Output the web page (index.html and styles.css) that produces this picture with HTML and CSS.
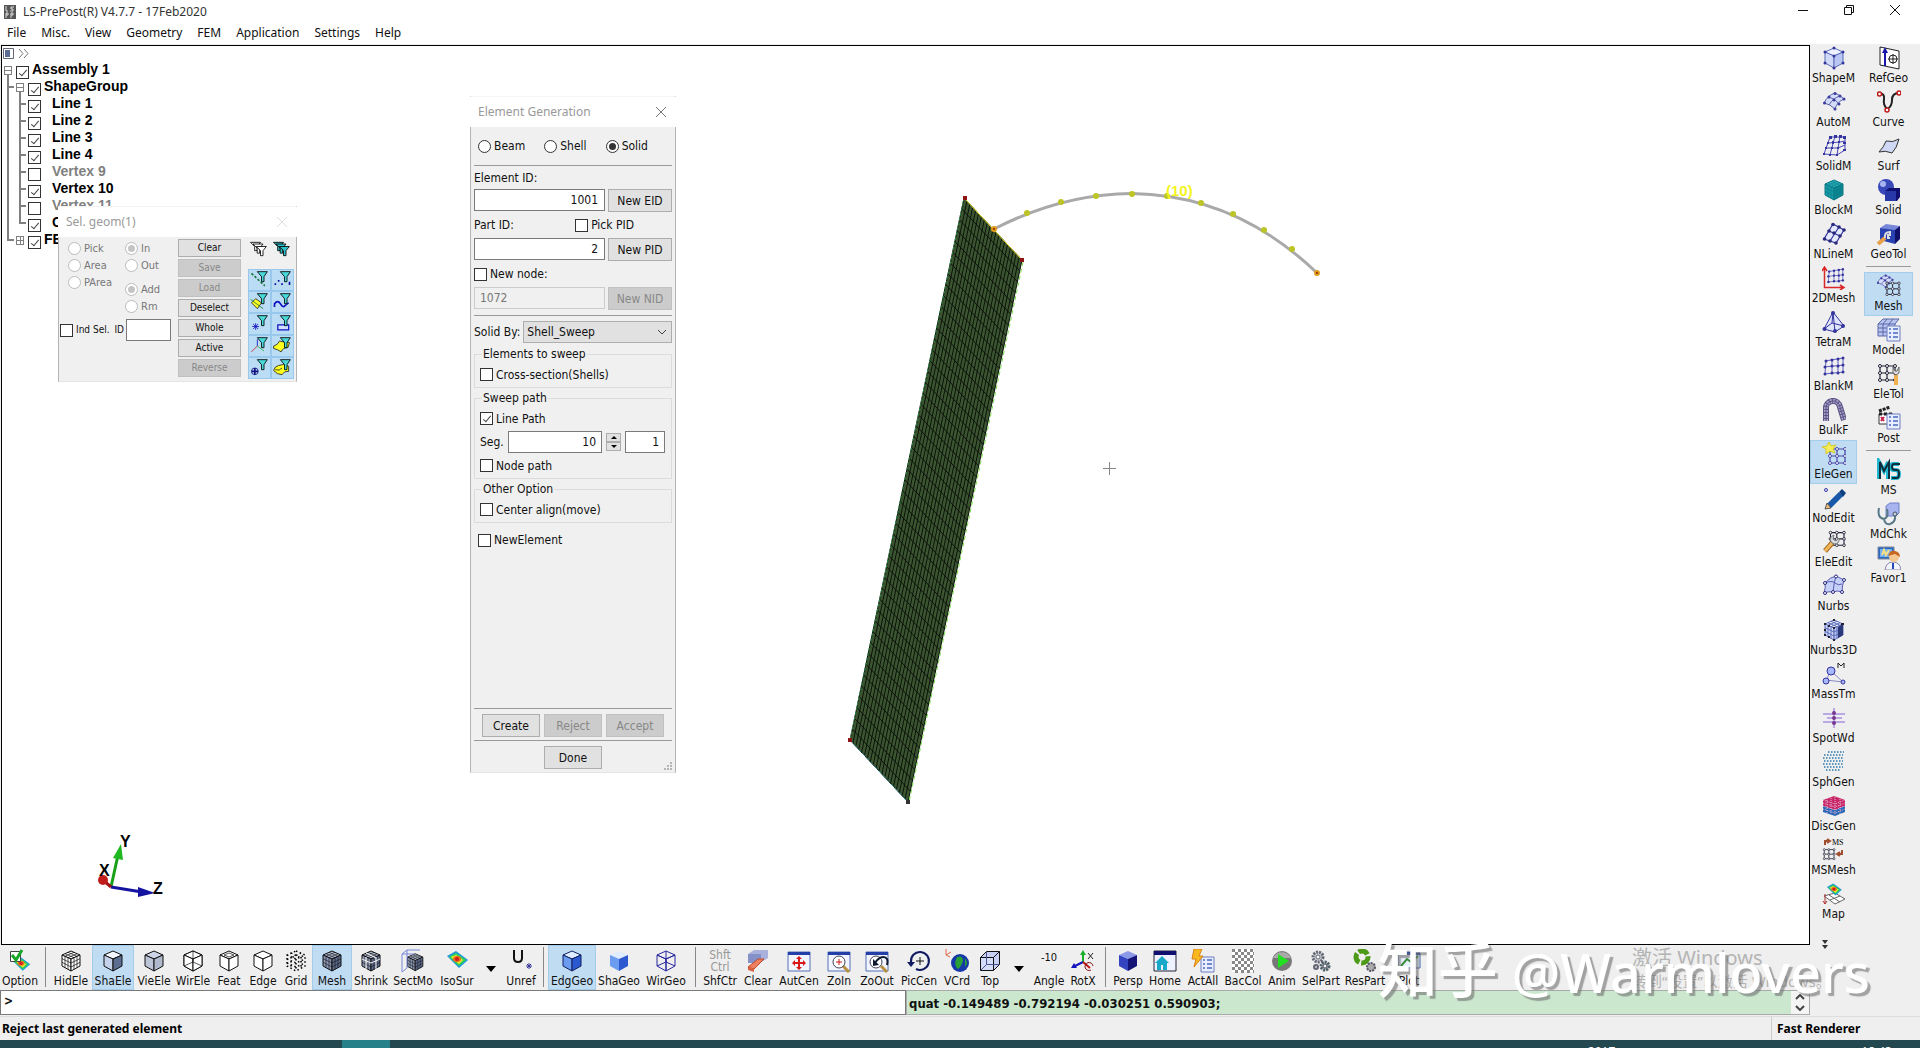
FILE: index.html
```html
<!DOCTYPE html>
<html lang="en">
<head>
    <meta charset="UTF-8">
    <meta name="viewport" content="width=device-width, initial-scale=1.0">
    <title>LS-PrePost(R) V4.7.7 - 17Feb2020</title>
    <link rel="stylesheet" href="styles.css">
</head>
<body>
    <!-- icon set -->
    <svg class="sprite" aria-hidden="true">
        <symbol id="cube" viewBox="0 0 24 24">
            <path class="top" d="M12 2 21 6 12 10 3 6z"/>
            <path class="left" d="M3 6 12 10V22L3 17z"/>
            <path class="right" d="M21 6 12 10V22L21 17z"/>
        </symbol>
        <symbol id="cubegrid" viewBox="0 0 24 24">
            <use href="#cube"/>
            <path class="ln" d="M6 7.3 15 3.3M9 8.7 18 4.7M6 4.7 15 8.7M9 3.3 18 7.3M6 7.3V18.7M9 8.7V20.3M15 8.7V20.3M18 7.3V18.7M3 9.7 12 14 21 9.7M3 13.3 12 18 21 13.3"/>
        </symbol>
        <symbol id="wire" viewBox="0 0 24 24">
            <use href="#cube"/>
            <path class="ln" d="M12 2V13M3 17 12 13 21 17"/>
        </symbol>
        <symbol id="patch" viewBox="0 0 24 24">
            <path d="M2 13Q6 5 13 3Q18 5 22 9Q15 12 13 19Q8 14 2 13z" fill="#d3dcf8" stroke="#5c5cb0"/>
            <path d="M7 7Q14 9 17 14M7 15Q11 8 18 6" fill="none" stroke="#5c5cb0"/>
            <g fill="#3c3c9c"><circle cx="2.500" cy="13" r="1.500"/><circle cx="13" cy="3.500" r="1.500"/><circle cx="22" cy="9" r="1.500"/><circle cx="13" cy="19" r="1.500"/><circle cx="7" cy="7" r="1.500"/><circle cx="17" cy="14" r="1.500"/><circle cx="18" cy="6" r="1.500"/><circle cx="12" cy="10" r="1.500"/></g>
        </symbol>
        <symbol id="grid" viewBox="0 0 24 24">
            <path d="M3 7 21 4M2 13 22 11M2 20 22 18M4 6 3 20M10 5 10 20M16 4 16 19M21 3 21 18" fill="none" stroke="#5c5cc0"/>
            <g fill="#34349c"><circle cx="4" cy="7" r="1.500"/><circle cx="10" cy="6" r="1.500"/><circle cx="16" cy="5" r="1.500"/><circle cx="21" cy="4" r="1.500"/><circle cx="3" cy="13" r="1.500"/><circle cx="10" cy="12" r="1.500"/><circle cx="16" cy="12" r="1.500"/><circle cx="21" cy="11" r="1.500"/><circle cx="3" cy="20" r="1.500"/><circle cx="10" cy="19" r="1.500"/><circle cx="16" cy="19" r="1.500"/><circle cx="21" cy="18" r="1.500"/></g>
        </symbol>
        <symbol id="nodes" viewBox="0 0 24 24">
            <path d="M5 4H20M5 11H20M5 18H20M5 4V18M12 4V18M20 4V18" fill="none" stroke="currentColor" stroke-width="1.200"/>
            <g fill="#fff" stroke="currentColor"><circle cx="5" cy="4" r="1.500"/><circle cx="12" cy="4" r="1.500"/><circle cx="20" cy="4" r="1.500"/><circle cx="5" cy="11" r="1.500"/><circle cx="12" cy="11" r="1.500"/><circle cx="20" cy="11" r="1.500"/><circle cx="5" cy="18" r="1.500"/><circle cx="12" cy="18" r="1.500"/><circle cx="20" cy="18" r="1.500"/></g>
        </symbol>
        <symbol id="wrench" viewBox="0 0 24 24">
            <path d="M3 21 11 12" stroke="#a06a20" stroke-width="5"/><path d="M3 21 10 13" stroke="#f2b75a" stroke-width="3"/>
            <path d="M9 12Q7 7 12 5L11 9 14 11 17 8Q18 14 12 14z" fill="#d8dce0" stroke="#777"/>
        </symbol>
        <symbol id="sheet" viewBox="0 0 24 24">
            <path d="M10 8H23V23H10z" fill="#e8edff" stroke="#6d7fc0"/>
            <path d="M12 11H14M16 11H21M12 15H14M16 15H21M12 19H14M16 19H21" stroke="#4a68c0" stroke-width="1.500"/>
        </symbol>
        <symbol id="map" viewBox="0 0 24 24">
            <path d="M2 7 11 2 23 11 14 19z" fill="#1c9ad6"/><path d="M4 8 11 4 21 11 14 17z" fill="#38d24e"/>
            <path d="M6 8 11 6 18 11 14 15z" fill="#f3ea2c"/><ellipse cx="12" cy="10" rx="4" ry="3" fill="#f06a1c"/><ellipse cx="12" cy="10" rx="2" ry="2" fill="#d01c1c"/>
        </symbol>
        <symbol id="win" viewBox="0 0 24 24">
            <path d="M1 3H23V22H1z" fill="#f2f5ff" stroke="#5470b8"/><path d="M1 3H23V6H1z" fill="#2440a8"/>
        </symbol>
        <symbol id="gear" viewBox="0 0 24 24">
            <circle cx="9" cy="8" r="5" fill="#c9cdd0" stroke="#667" stroke-width="3" stroke-dasharray="2 1"/><circle cx="9" cy="8" r="2" fill="#fff" stroke="#667"/>
            <circle cx="16" cy="17" r="4" fill="#a9b4bb" stroke="#4f6068" stroke-width="3" stroke-dasharray="2 1"/><circle cx="16" cy="17" r="2" fill="#eee" stroke="#556"/>
            <circle cx="7" cy="18" r="2" fill="#c9cdd0" stroke="#667" stroke-width="2"/>
        </symbol>
        <symbol id="funnel" viewBox="0 0 24 24">
            <path d="M10 2H22L18 8V14H15V8z" fill="#48d8d8" stroke="#000"/>
        </symbol>
        <symbol id="funnels" viewBox="0 0 24 24">
            <path d="M3 4H15L11 9V14H8V9z" fill="currentColor" stroke="#000"/>
            <path d="M6 6H18L14 11V17H11V11z" fill="currentColor" stroke="#000"/>
            <path d="M10 9H22L18 14V20H15V14z" fill="currentColor" stroke="#000"/>
        </symbol>
    </svg>

    <header class="titlebar">
        <svg class="appicon" viewBox="0 0 12 14"><path fill="#555" d="M0 0H12V14H0z"/><path stroke="#ddd" fill="none" d="M2 1V6H4M10 2H7V4H9V6H6M2 13V8H4V10H2M7 13V8H9V10H7"/></svg>
        <h1>LS-PrePost(R) V4.7.7 - 17Feb2020</h1>
        <div class="winbtns">
            <button aria-label="Minimize"><svg viewBox="0 0 12 12"><path d="M1 6.500H11"/></svg></button>
            <button aria-label="Restore"><svg viewBox="0 0 12 12"><path d="M1.500 3.500H8.500V10.500H1.500zM3.500 3.500V1.500H10.500V8.500H8.500"/></svg></button>
            <button aria-label="Close"><svg viewBox="0 0 12 12"><path d="M1 1 11 11M11 1 1 11"/></svg></button>
        </div>
    </header>
    <nav class="menu">
        <button>File</button><button>Misc.</button><button>View</button><button>Geometry</button><button>FEM</button><button>Application</button><button>Settings</button><button>Help</button>
    </nav>

    <div class="work">
        <main class="left-side">
            <section class="canvas">
                <svg class="scene">
                    <g transform="translate(-2 -46)">
                        <path d="M964 198 1022 260 908 802 850 740z" fill="#3b5530"/>
                        <path id="mesh" fill="none" stroke="#0b120a"/>
                        <path d="M964 198 850 740" stroke="#2f8a4a" stroke-dasharray="3 2"/>
                        <path d="M964 198 1022 260" stroke="#e8e020"/>
                        <path d="M1023 262 909 802" stroke="#7ddc50" stroke-dasharray="4 3"/>
                        <path d="M850 740 908 802" stroke="#2a8f90" stroke-dasharray="4 2"/>
                        <path d="M994 229Q1062 194 1132 193.500Q1236 195 1317 273" fill="none" stroke="#a9a9a9" stroke-width="3"/>
                        <g fill="#bdc425">
                            <circle cx="1027" cy="213" r="3"/><circle cx="1061" cy="202" r="3"/><circle cx="1096" cy="196" r="3"/><circle cx="1132" cy="194" r="3"/><circle cx="1167" cy="196" r="3"/>
                            <circle cx="1201" cy="203" r="3"/><circle cx="1233" cy="214" r="3"/><circle cx="1264" cy="230" r="3"/><circle cx="1292" cy="249" r="3"/>
                        </g>
                        <g fill="#7a2a08" stroke="#e39a1c" stroke-width="2"><circle cx="994" cy="229" r="2"/><circle cx="1317" cy="273" r="2"/></g>
                        <g fill="#8c1414"><path d="M963 196H967V200H963zM1020 258H1024V262H1020zM848 738H852V742H848z"/><path fill="#333" d="M906 800H910V804H906z"/></g>
                        <text class="seglabel" x="1166" y="196">(10)</text>
                        <path d="M1103 468.500H1116M1109.500 462V475" stroke="#888"/>
                        <!-- axis triad -->
                        <path d="M111 887 118 855" stroke="#18a018" stroke-width="3"/><path d="M113 858 121 844 123 860z" fill="#20b820"/>
                        <path d="M111 887 142 892" stroke="#1414a0" stroke-width="3"/><path d="M138 887 155 893 138 897z" fill="#1414a0"/>
                        <path d="M111 887 103 880" stroke="#a01414" stroke-width="3"/><circle cx="103" cy="880" r="5" fill="#c01c1c"/>
                        <g class="axis"><text x="120" y="847">Y</text><text x="99" y="876">X</text><text x="153" y="894">Z</text></g>
                    </g>
                </svg>

                <div class="tree">
                    <div class="treebar">
                        <svg viewBox="0 0 28 14"><path d="M1.500 2.500H11.500V12.500H1.500z" fill="#fff" stroke="#667"/><path d="M3 4H8V11H3z" fill="#5c6c94"/><path d="M17 3 21 7.500 17 12M22 3 26 7.500 22 12" fill="none" stroke="#777"/></svg>
                    </div>
                    <div class="node"><i class="exp"></i><label><input type="checkbox" checked><b>Assembly 1</b></label></div>
                    <div class="node"><i class="tee"></i><i class="exp"></i><label><input type="checkbox" checked><b>ShapeGroup</b></label></div>
                    <div class="node leaf"><i class="bar"></i><i class="tee"></i><label><input type="checkbox" checked><b>Line 1</b></label></div>
                    <div class="node leaf"><i class="bar"></i><i class="tee"></i><label><input type="checkbox" checked><b>Line 2</b></label></div>
                    <div class="node leaf"><i class="bar"></i><i class="tee"></i><label><input type="checkbox" checked><b>Line 3</b></label></div>
                    <div class="node leaf"><i class="bar"></i><i class="tee"></i><label><input type="checkbox" checked><b>Line 4</b></label></div>
                    <div class="node leaf off"><i class="bar"></i><i class="tee"></i><label><input type="checkbox"><b>Vertex 9</b></label></div>
                    <div class="node leaf"><i class="bar"></i><i class="tee"></i><label><input type="checkbox" checked><b>Vertex 10</b></label></div>
                    <div class="node leaf off"><i class="bar"></i><i class="tee"></i><label><input type="checkbox"><b>Vertex 11</b></label></div>
                    <div class="node leaf"><i class="bar"></i><i class="ell"></i><label><input type="checkbox" checked><b>C</b></label></div>
                    <div class="node"><i class="ell"></i><i class="exp plus"></i><label><input type="checkbox" checked><b>FE</b></label></div>
                </div>

                <section class="window selgeom">
                    <header><h2>Sel. geom(1)</h2><button aria-label="Close"><svg viewBox="0 0 12 12"><path d="M1 1 11 11M11 1 1 11"/></svg></button></header>
                    <div class="selbody">
                        <div class="selleft">
                            <div class="radios">
                                <div>
                                    <label><input type="radio" name="how" disabled>Pick</label>
                                    <label><input type="radio" name="how" disabled>Area</label>
                                    <label><input type="radio" name="how" disabled>PArea</label>
                                </div>
                                <div>
                                    <label><input type="radio" name="side" checked disabled>In</label>
                                    <label><input type="radio" name="side" disabled>Out</label>
                                    <label class="apart"><input type="radio" name="op" checked disabled>Add</label>
                                    <label><input type="radio" name="op" disabled>Rm</label>
                                </div>
                            </div>
                            <div class="indsel">
                                <label><input type="checkbox">Ind Sel.</label>
                                <label for="selid">ID</label><input type="text" id="selid">
                            </div>
                        </div>
                        <div class="selbtns">
                            <button>Clear</button><button disabled>Save</button><button disabled>Load</button><button>Deselect</button><button>Whole</button><button>Active</button><button disabled>Reverse</button>
                        </div>
                        <div class="filters">
                            <button class="plain" aria-label="No filter"><svg class="none"><use href="#funnels"/></svg></button>
                            <button class="plain" aria-label="All filters"><svg class="all"><use href="#funnels"/></svg></button>
                            <button aria-label="Edge filter"><svg viewBox="0 0 24 24"><path d="M3 4 19 19" stroke="#1a7a3a" stroke-width="2" stroke-dasharray="3 2"/><use href="#funnel"/></svg></button>
                            <button aria-label="Point filter"><svg viewBox="0 0 24 24"><path d="M3 16H5V18H3zM7 12H9V14H7zM11 16H13V18H11zM20 14H22V18H20z" fill="#1010a0"/><use href="#funnel"/></svg></button>
                            <button aria-label="Face filter"><svg viewBox="0 0 24 24"><path d="M3 13 8 8 15 13 10 20z" fill="#ffff20" stroke="#223"/><path d="M2 9 17 20" stroke="#1a7a3a"/><use href="#funnel"/></svg></button>
                            <button aria-label="Curve filter"><svg viewBox="0 0 24 24"><path d="M3 18V14Q7 9 10 14T15 17T20 13" fill="none" stroke="#1010c0" stroke-width="2"/><use href="#funnel"/></svg></button>
                            <button aria-label="Vertex filter"><svg viewBox="0 0 24 24"><path d="M8 11V19M4 15H12M5 12 11 18M11 12 5 18" stroke="#1010c0"/><use href="#funnel"/></svg></button>
                            <button aria-label="Plane filter"><svg viewBox="0 0 24 24"><path d="M7 13H20V19H7z" fill="#cfe0ff" stroke="#1010c0" stroke-width="1.500"/><use href="#funnel"/></svg></button>
                            <button aria-label="Axis filter"><svg viewBox="0 0 24 24"><path d="M10 4V12" stroke="#1010c0"/><path d="M10 12 3 19" stroke="#d02020"/><path d="M10 12 18 18" stroke="#20b040"/><use href="#funnel"/></svg></button>
                            <button aria-label="Shell filter"><svg viewBox="0 0 24 24"><path d="M2 12Q7 11 9 6Q15 8 21 8L19 14Q13 14 11 19Q7 16 2 15z" fill="#ffff20" stroke="#222"/><use href="#funnel"/></svg></button>
                            <button aria-label="Center filter"><svg viewBox="0 0 24 24"><circle cx="7" cy="16" r="4" fill="none" stroke="#101080"/><path d="M7 12V20M3 16H11" stroke="#101080" stroke-width="2"/><use href="#funnel"/></svg></button>
                            <button aria-label="Solid filter"><svg viewBox="0 0 24 24"><path d="M2 15Q3 10 8 9Q14 6 20 10L20 16Q15 15 12 20Q6 20 2 15z" fill="#ffff20" stroke="#222"/><path d="M4 14Q9 16 12 12" fill="none" stroke="#222"/><use href="#funnel"/></svg></button>
                        </div>
                    </div>
                </section>

                <section class="window elegen">
                    <header><h2>Element Generation</h2><button aria-label="Close"><svg viewBox="0 0 12 12"><path d="M1 1 11 11M11 1 1 11"/></svg></button></header>
                    <form class="genbody">
                        <div class="kind">
                            <label><input type="radio" name="kind">Beam</label>
                            <label><input type="radio" name="kind">Shell</label>
                            <label><input type="radio" name="kind" checked>Solid</label>
                        </div>
                        <hr>
                        <div class="line"><label for="eid">Element ID:</label></div>
                        <div class="field"><input type="text" id="eid" value="1001"><button type="button">New EID</button></div>
                        <div class="line wide"><label for="pid">Part ID:</label><label class="pick"><input type="checkbox">Pick PID</label></div>
                        <div class="field"><input type="text" id="pid" value="2"><button type="button">New PID</button></div>
                        <div class="line wide"><label><input type="checkbox">New node:</label></div>
                        <div class="field nid"><input type="text" value="1072" aria-label="Node ID" disabled><button type="button" disabled>New NID</button></div>
                        <hr>
                        <div class="by"><label for="by">Solid By:</label><select id="by"><option>Shell_Sweep</option></select></div>
                        <fieldset>
                            <legend>Elements to sweep</legend>
                            <label><input type="checkbox">Cross-section(Shells)</label>
                        </fieldset>
                        <fieldset>
                            <legend>Sweep path</legend>
                            <label><input type="checkbox" checked>Line Path</label>
                            <div class="seg">
                                <label for="seg">Seg.</label><input type="text" id="seg" value="10">
                                <span class="spin"><button type="button" aria-label="More"></button><button type="button" aria-label="Less" class="down"></button></span>
                                <input type="text" class="ratio" value="1" aria-label="Ratio">
                            </div>
                            <label><input type="checkbox">Node path</label>
                        </fieldset>
                        <fieldset>
                            <legend>Other Option</legend>
                            <label><input type="checkbox">Center align(move)</label>
                        </fieldset>
                        <label class="newel"><input type="checkbox">NewElement</label>
                        <hr class="push">
                        <div class="actions"><button type="button">Create</button><button type="button" disabled>Reject</button><button type="button" disabled>Accept</button></div>
                        <hr>
                        <div class="actions"><button type="button">Done</button></div>
                    </form>
                    <svg class="grip" viewBox="0 0 10 10"><path d="M7 1H9V3H7zM4 4H6V6H4zM7 4H9V6H7zM1 7H3V9H1zM4 7H6V9H4zM7 7H9V9H7z" fill="#b5b5b5"/></svg>
                </section>
            </section>

            <div class="toolbar">
                <button class="tool s40"><svg viewBox="0 0 24 24"><g transform="translate(1 6)"><use href="#map" width="24" height="20"/></g><path d="M2.500 2.500H12.500V12.500H2.500z" fill="#fff" stroke="#444"/><path d="M4 6 8 11 14 1" fill="none" stroke="#18a828" stroke-width="3"/></svg>Option</button>
                <i class="sep"></i>
                <button class="tool s42"><svg class="white"><use href="#cubegrid"/></svg>HidEle</button>
                <button class="tool s42 on"><svg class="shade"><use href="#cube"/></svg>ShaEle</button>
                <button class="tool s40"><svg class="flat"><use href="#cube"/></svg>VieEle</button>
                <button class="tool s38"><svg class="white"><use href="#cubegrid"/><use href="#wire"/></svg>WirEle</button>
                <button class="tool s34"><svg class="white" viewBox="0 0 24 24"><use href="#cube"/><path class="ln" d="M7 6 12 4 17 6 12 8z"/></svg>Feat</button>
                <button class="tool s34"><svg class="white"><use href="#cube"/></svg>Edge</button>
                <button class="tool s32"><svg viewBox="0 0 24 24"><path d="M12 2 21 6V17L12 22 3 17V6zM3 6 12 10 21 6M12 10V22M3 10 12 14 21 10M3 14 12 18 21 14M7 8V20M17 8V20M7 4 17 9M17 4 7 9" fill="none" stroke="#000" stroke-width="1.500" stroke-dasharray="1.500 2.500"/></svg>Grid</button>
                <button class="tool s40 on"><svg class="dark"><use href="#cubegrid"/></svg>Mesh</button>
                <button class="tool s38"><svg class="dark" viewBox="0 0 24 24"><use href="#cubegrid"/><path d="M3 10 12 14 21 10M7 8V20M17 8V20M7 4 17 9" fill="none" stroke="#fff"/></svg>Shrink</button>
                <button class="tool s46"><svg class="dark" viewBox="0 0 24 24"><g transform="translate(4 3) scale(.850)"><use href="#cubegrid" width="24" height="24"/></g><path d="M1 5 6 1V19L1 23zM6 1H19M1 5H13" fill="none" stroke="#7a88d8"/></svg>SectMo</button>
                <button class="tool s42"><svg><use href="#map"/></svg>IsoSur</button>
                <button class="drop" aria-label="More surfaces"></button>
                <button class="tool s34"><svg viewBox="0 0 24 24"><path d="M5 1V9Q5 13 9 13T13 9V1" fill="none" stroke="#111" stroke-width="2"/><path d="M20 14V20M17 17H23M18 15 22 19M22 15 18 19" stroke="#34349c"/></svg>Unref</button>
                <i class="sep"></i>
                <button class="tool s48 on"><svg class="blue"><use href="#cube"/></svg>EdgGeo</button>
                <button class="tool s46"><svg class="blue noline"><use href="#cube"/></svg>ShaGeo</button>
                <button class="tool s48"><svg class="wired"><use href="#wire"/></svg>WirGeo</button>
                <i class="sep"></i>
                <button class="tool s40"><span class="keys">Shft<br>Ctrl</span>ShfCtr</button>
                <button class="tool s36"><svg viewBox="0 0 24 24"><path d="M2 5 8 1H22V9L14 14H2z" fill="#a8b2dc"/><path d="M2 5H15V14H2z" fill="#8490c8"/><path d="M2 18 12 10H18L8 20z" fill="#f08060" stroke="#c04828"/><path d="M2 18 8 20V23L2 21z" fill="#d86040"/></svg>Clear</button>
                <button class="tool s46"><svg viewBox="0 0 24 24"><use href="#win"/><path d="M12 8V20M6 14H18" stroke="#d81818" stroke-width="2"/><path d="M12 7 15 10H9zM12 21 15 18H9zM5 14 8 11V17zM19 14 16 11V17z" fill="#d81818"/></svg>AutCen</button>
                <button class="tool s34"><svg viewBox="0 0 24 24"><use href="#win"/><path d="M16 17 22 23" stroke="#b89040" stroke-width="3"/><circle cx="12" cy="13" r="6" fill="#fff" stroke="#445"/><path d="M12 10V16M9 13H15" stroke="#c81818"/></svg>ZoIn</button>
                <button class="tool s42"><svg viewBox="0 0 24 24"><use href="#win"/><path d="M16 17 22 23" stroke="#b89040" stroke-width="3"/><circle cx="11" cy="13" r="6" fill="#fff" stroke="#445"/><path d="M22 16Q24 8 18 8 14 8 10 14" fill="none" stroke="#101830" stroke-width="2"/><path d="M8 10V17L14 16z" fill="#101830"/></svg>ZoOut</button>
                <button class="tool s42"><svg viewBox="0 0 24 24"><path d="M4 13A9 9 0 1 1 9 20" fill="none" stroke="#101a60" stroke-width="2"/><path d="M0 13H8L4 18z" fill="#101a60"/><path d="M13 8V16M9 12H17" stroke="#111"/></svg>PicCen</button>
                <button class="tool s34"><svg viewBox="0 0 24 24"><circle cx="15" cy="14" r="9" fill="#1638a8"/><path d="M12 8Q18 6 18 12 16 18 13 20 8 16 12 8zM20 9Q24 14 20 18z" fill="#28a038"/><path d="M1 0V6L5 8M1 6 6 3" fill="none" stroke="#e06848"/></svg>VCrd</button>
                <button class="tool s32"><svg viewBox="0 0 24 24"><path d="M2.500 8.500H15.500V21.500H2.500z" fill="#d4dcf8" stroke="#111"/><path d="M2.500 8.500 8.500 2.500H21.500V15.500L15.500 21.500V8.500z" fill="#c8d0f4" stroke="#111"/><path d="M15.500 8.500 21.500 2.500" stroke="#111"/><path d="M8.500 2.500V15.500H21.500M8.500 15.500 2.500 21.500" fill="none" stroke="#4a5290"/></svg>Top</button>
                <button class="drop" aria-label="More views"></button>
                <button class="tool s34"><span class="angle">-10</span>Angle</button>
                <button class="tool s34"><svg viewBox="0 0 24 24"><path d="M12 13V3" stroke="#18b028" stroke-width="2"/><path d="M12 13 2 18" stroke="#1414c0" stroke-width="2"/><path d="M12 1 15 6H9z" fill="#18b028"/><path d="M0 19 3 14 6 19z" fill="#1414c0"/><path d="M12 13 19 19" stroke="#c01414" stroke-width="2"/><path d="M22 17A4 4 0 1 0 20 21" fill="none" stroke="#801010"/><path d="M17 4 22 10M22 4 17 10" stroke="#222"/></svg>RotX</button>
                <i class="sep"></i>
                <button class="tool s36"><svg class="navy noline"><use href="#cube"/></svg>Persp</button>
                <button class="tool s38"><svg viewBox="0 0 24 24"><path d="M1 2H23V22H1z" fill="#eef2ff" stroke="#223"/><path d="M1 2H23V6H1z" fill="#101070"/><path d="M2 14 9 7 16 14H14V21H10V16H8V21H4V14z" fill="#18a8c8"/></svg>Home</button>
                <button class="tool s38"><svg viewBox="0 0 24 24"><use href="#sheet"/><path d="M3 0H11L8 7H12L3 18 5 10H1z" fill="#f8b820" stroke="#d88010"/></svg>ActAll</button>
                <button class="tool s42"><svg viewBox="0 0 24 24"><path d="M1 0H23V23H1z" fill="#fff"/><path d="M1 1.500H23M1 7.500H23M1 13.500H23M1 19.500H23" stroke="#888" stroke-width="3" stroke-dasharray="3 3"/><path d="M4 4.500H23M4 10.500H23M4 16.500H23M4 22.500H23" stroke="#888" stroke-width="3" stroke-dasharray="3 3"/></svg>BacCol</button>
                <button class="tool s36"><svg viewBox="0 0 24 24"><circle cx="12" cy="12" r="10" fill="#777"/><path d="M3 9A10 10 0 0 1 21 9z" fill="#aaa"/><path d="M8 5 19 12 8 19z" fill="#20e020"/></svg>Anim</button>
                <button class="tool s42"><svg><use href="#gear"/></svg>SelPart</button>
                <button class="tool s46"><svg viewBox="0 0 24 24"><circle cx="9" cy="8" r="6" fill="none" stroke="#4c9a18" stroke-width="5" stroke-dasharray="10 2"/><circle cx="18" cy="18" r="4" fill="#aaa" stroke="#556" stroke-width="2" stroke-dasharray="2 1"/></svg>ResPart</button>
                <button class="tool s42"><svg viewBox="0 0 24 24"><path d="M1 3H23V19H1z" fill="#e6f0fa" stroke="#4060a0"/><path d="M1 3H23V6H1z" fill="#2848a0"/><path d="M4 17 10 10 14 13 21 7" fill="none" stroke="#3a8a3a" stroke-width="2"/></svg>Plot</button>
            </div>

            <div class="cmdrow">
                <input type="text" class="cmd" value="&gt;" aria-label="Command">
                <div class="log"><p>quat -0.149489 -0.792194 -0.030251 0.590903;</p>
                    <div class="scroll">
                        <button aria-label="Up"><svg viewBox="0 0 10 6"><path d="M1 5 5 1 9 5"/></svg></button>
                        <button aria-label="Down"><svg viewBox="0 0 10 6"><path d="M1 1 5 5 9 1"/></svg></button>
                    </div>
                </div>
            </div>
        </main>

        <aside class="side">
            <div class="col">
                <button class="tool"><svg viewBox="0 0 24 24"><g class="pale"><use href="#cube"/></g><g fill="#34349c"><circle cx="12" cy="2" r="1.500"/><circle cx="21" cy="6" r="1.500"/><circle cx="3" cy="6" r="1.500"/><circle cx="12" cy="10" r="1.500"/><circle cx="21" cy="17" r="1.500"/><circle cx="3" cy="17" r="1.500"/><circle cx="12" cy="22" r="1.500"/></g></svg>ShapeM</button>
                <button class="tool"><svg><use href="#patch"/></svg>AutoM</button>
                <button class="tool"><svg viewBox="0 0 24 24"><path d="M8 3 2 20M13 2 8 21M18 2 15 21M23 2V16M8 3H23M6 9 18 8 23 7M4 14 16 14 23 11M2 20 15 21 23 16" fill="none" stroke="#4848b8"/><path d="M7 2H10V5H7zM12 1H15V4H12zM17 1H20V4H17zM5 8H7V10H5zM10 7H12V10H10zM16 7H18V9H16zM3 13H5V15H3zM9 13H11V15H9zM15 13H17V15H15zM1 19H3V21H1zM7 20H9V22H7zM14 20H16V22H14zM21 2H24V5H21zM21 8H24V10H21zM21 15H24V17H21z" fill="#34349c"/></svg>SolidM</button>
                <button class="tool"><svg class="teal"><use href="#cubegrid"/></svg>BlockM</button>
                <button class="tool"><svg viewBox="0 0 24 24"><path d="M11 2 22 8 14 21 2 17zM7 9 18 14M17 5 8 19" fill="#e6eaff" stroke="#34349c" stroke-width="1.200"/><g fill="#28287c"><circle cx="11" cy="2.500" r="1.800"/><circle cx="22" cy="8" r="1.800"/><circle cx="14" cy="21" r="1.800"/><circle cx="2.500" cy="17" r="1.800"/><circle cx="7" cy="9" r="1.800"/><circle cx="18" cy="14" r="1.800"/><circle cx="17" cy="5" r="1.800"/><circle cx="8" cy="19" r="1.800"/><circle cx="12" cy="11" r="1.800"/></g></svg>NLineM</button>
                <button class="tool"><svg viewBox="0 0 24 24"><g transform="translate(4 0) scale(.800)"><use href="#grid" width="24" height="24"/></g><path d="M2.500 2V21.500H22M0 5 2.500 1 5 5M18 19 22 21.500 18 24" fill="none" stroke="#d82828" stroke-width="1.500"/></svg>2DMesh</button>
                <button class="tool"><svg viewBox="0 0 24 24"><path d="M11 2 2 19 13 22 22 16z" fill="#dfe4ff" stroke="#34349c"/><path d="M11 2 13 22M2 19 10 13 22 16M11 2 10 13" fill="none" stroke="#34349c"/><g fill="#34349c"><circle cx="11" cy="3" r="2"/><circle cx="2.500" cy="19" r="2"/><circle cx="13" cy="21" r="2"/><circle cx="21" cy="16" r="2"/></g></svg>TetraM</button>
                <button class="tool"><svg><use href="#grid"/></svg>BlankM</button>
                <button class="tool"><svg viewBox="0 0 24 24"><path d="M4 23V11A7 7 0 0 1 18 9L22 22" fill="none" stroke="#5c5484" stroke-width="6"/><path d="M4 23V11A7 7 0 0 1 18 9L22 22" fill="none" stroke="#a8a0c8" stroke-width="4" stroke-dasharray="2 1"/><path d="M4 23V11A7 7 0 0 1 18 9L22 22" fill="none" stroke="#5c5484"/></svg>BulkF</button>
                <button class="tool on"><svg class="violet" viewBox="0 0 24 24"><g transform="translate(3 3)"><use href="#nodes" width="24" height="24"/></g><path d="M7 0 9 4 14 3 11 7 13 11 8 9 4 12 4 7 0 5 5 4z" fill="#f4ec58" stroke="#d8c828"/></svg>EleGen</button>
                <button class="tool"><svg viewBox="0 0 24 24"><path d="M7 20 19 8" stroke="#1858a8" stroke-width="6"/><path d="M17 6 20 3 24 7 21 11z" fill="#104080"/><path d="M9 22 3 23 5 17z" fill="#f0c078" stroke="#555"/><circle cx="4" cy="4" r="1.500" fill="none" stroke="#3434b0"/></svg>NodEdit</button>
                <button class="tool"><svg class="ink" viewBox="0 0 24 24"><g transform="translate(4 -1) scale(.900)"><use href="#nodes" width="24" height="24"/></g><use href="#wrench"/></svg>EleEdit</button>
                <button class="tool"><svg viewBox="0 0 24 24"><path d="M3 9Q8 3 14 2L22 6Q20 12 20 18Q15 16 11 18Q7 17 2 19Q4 13 3 9z" fill="#c4d0f8" stroke="#5c5cb0"/><path d="M3 9Q10 6 13 9T20 10M14 2Q12 8 11 18" fill="none" stroke="#5c5cb0"/><g fill="#fff" stroke="#28287c"><circle cx="3" cy="9" r="1.500"/><circle cx="14" cy="2.500" r="1.500"/><circle cx="22" cy="6" r="1.500"/><circle cx="20" cy="18" r="1.500"/><circle cx="11" cy="18" r="1.500"/><circle cx="3" cy="19" r="1.500"/></g></svg>Nurbs</button>
                <button class="tool"><svg class="pale" viewBox="0 0 24 24"><use href="#cubegrid"/><path d="M16 9 21 6V17L16 20z" fill="#283878"/><path d="M2 5H4V7H2zM2 16H4V18H2zM11 1H13V3H11zM11 9H13V11H11zM11 21H13V23H11zM2 11H4V13H2zM6 7H8V9H6zM6 18H8V20H6zM19 5H22V7H19z" fill="#223"/></svg>Nurbs3D</button>
                <button class="tool"><svg viewBox="0 0 24 24"><path d="M9 9 4 18 21 20z" fill="none" stroke="#8888c8"/><g fill="#a8b8ff" stroke="#34349c"><circle cx="9" cy="9" r="4"/><circle cx="4" cy="19" r="3"/><circle cx="21" cy="20" r="2"/></g><path d="M16 6V1L19 4 22 1V6" fill="none" stroke="#222"/></svg>MassTm</button>
                <button class="tool"><svg viewBox="0 0 24 24"><path d="M1 8H23M5 12H20M1 16H23M12 2V22" stroke="#8860d8"/><g fill="#7a3890"><circle cx="12" cy="7" r="2"/><circle cx="12" cy="12" r="2"/><circle cx="12" cy="17" r="2"/></g></svg>SpotWd</button>
                <button class="tool"><svg viewBox="0 0 24 24"><path d="M2 5H21M1 8H22M2 11H21M1 14H22M2 17H21M4 20H18M6 2H22" stroke="#2878b0" stroke-width="1.500" stroke-dasharray="1.500 1.500"/></svg>SphGen</button>
                <button class="tool"><svg viewBox="0 0 24 24"><path d="M1 6 12 2 23 6V12L13 16 1 12z" fill="#c82868"/><path d="M1 12 13 16 23 12V18L13 22 1 18z" fill="#2868b8"/><path d="M1 6 13 10 23 6M1 9 13 13 23 9M1 12 13 16 23 12M1 15 13 19 23 15M5 4V19M9 4V20M13 3V21M18 5V20" fill="none" stroke="#e8b0d0" stroke-dasharray="1 1"/></svg>DiscGen</button>
                <button class="tool"><svg class="ink" viewBox="0 0 24 24"><g transform="translate(-1 9) scale(.650)"><use href="#nodes" width="24" height="24"/></g><path d="M3 7V3H7M5 1 8 3 5 5M20 12V16H16M18 14 15 16 18 18" fill="none" stroke="#a05030" stroke-width="2"/><text class="tiny" x="10" y="7">MS</text></svg>MSMesh</button>
                <button class="tool"><svg viewBox="0 0 24 24"><path d="M2 14 13 11 23 17 13 22z" fill="#fff" stroke="#666"/><path d="M7 13 18 20M18 14 8 18" stroke="#666"/><use href="#map" width="24" height="17"/><path d="M3 12V22M1 19 3 22 5 19" fill="none" stroke="#b03030"/></svg>Map</button>
                <button class="more" aria-label="More"><svg viewBox="0 0 8 10"><path d="M1 0H7L4 4zM1 5H7L4 9z" fill="#333"/></svg></button>
            </div>
            <div class="col wide">
                <button class="tool"><svg viewBox="0 0 24 24"><path d="M3 1 22 5V23L3 19z" fill="#fff" stroke="#222"/><path d="M8 20V4" stroke="#1818a8" stroke-width="2"/><path d="M8 1 11 7H5z" fill="#1818a8"/><circle cx="16" cy="13" r="4" fill="none" stroke="#222"/><path d="M16 8V18M11 13H21" stroke="#222"/></svg>RefGeo</button>
                <button class="tool"><svg viewBox="0 0 24 24"><path d="M2 4Q8 3 7 9T10 19Q15 17 15 10T22 3" fill="none" stroke="#222" stroke-width="2"/><g fill="#fff" stroke="#c01818" stroke-width="1.500"><circle cx="2.500" cy="4" r="2"/><circle cx="10" cy="20" r="2"/><circle cx="22" cy="3" r="2"/></g></svg>Curve</button>
                <button class="tool"><svg viewBox="0 0 24 24"><path d="M2 18Q7 13 9 7 16 9 22 5 20 14 15 19 8 16 2 18z" fill="#cfd8f4" stroke="#333"/></svg>Surf</button>
                <button class="tool"><svg viewBox="0 0 24 24"><circle cx="9" cy="9" r="8" fill="#3848b8"/><circle cx="6" cy="6" r="3" fill="#a8b4f0"/><path d="M8 13 12 10H23V19L20 23H8z" fill="#101070"/><path d="M8 13H19V23H8z" fill="#2838a8"/></svg>Solid</button>
                <button class="tool"><svg viewBox="0 0 24 24"><path d="M3 6 9 2 23 4 20 9z" fill="#7888d8"/><path d="M3 6 18 8V22L3 18z" fill="#2840b0"/><path d="M18 8 23 4V17L18 22z" fill="#101068"/><path d="M1 22 8 16" stroke="#e8a048" stroke-width="4"/><path d="M8 16Q7 10 13 10V13H11V16H13" fill="none" stroke="#ddd" stroke-width="2"/></svg>GeoTol</button>
                <hr>
                <button class="tool on"><svg class="ink" viewBox="0 0 24 24"><g transform="translate(-1 -1) scale(.750)"><use href="#patch" width="24" height="24"/></g><g transform="translate(6 6) scale(.800)"><use href="#nodes" width="24" height="24"/></g></svg>Mesh</button>
                <button class="tool"><svg viewBox="0 0 24 24"><path d="M1 6 6 1H22L18 6V18H1z" fill="#b8c4f0" stroke="#5868a8"/><path d="M1 6H18M1 10H18M1 14H18M6 6V18M12 6V18M6 6 10 1M12 6 16 1" stroke="#5868a8"/><use href="#sheet"/></svg>Model</button>
                <button class="tool"><svg class="ink" viewBox="0 0 24 24"><g transform="translate(-2 0)"><use href="#nodes" width="24" height="24"/></g><path d="M19 13V23" stroke="#f0b050" stroke-width="4"/><path d="M16 5V11L19 13 22 11V5L20 9H18z" fill="#ddd" stroke="#666"/></svg>EleTol</button>
                <button class="tool"><svg viewBox="0 0 24 24"><path d="M2 8H16V18H2z" fill="#fff" stroke="#333"/><path d="M2 5 13 1" stroke="#222" stroke-width="3" stroke-dasharray="3 1"/><path d="M2 8H16" stroke="#222" stroke-width="3" stroke-dasharray="3 2"/><path d="M4 11 7 15M7 11 4 15" stroke="#c82048" stroke-width="2"/><use href="#sheet"/></svg>Post</button>
                <hr>
                <button class="tool"><svg viewBox="0 0 24 24"><path d="M2 21V4L7 13 11 4V21M22 6H16Q14 6 14 9T17 12H19Q22 12 22 16T19 20H14" fill="none" stroke="#20b8d0" stroke-width="4"/><path d="M3 21V4L7 13 12 4V21M23 6H17Q15 6 15 9T18 12H20Q22 12 22 16T20 20H15" fill="none" stroke="#103040" stroke-width="2"/></svg>MS</button>
                <button class="tool"><svg viewBox="0 0 24 24"><path d="M9 4 13 1H22V11L19 14H9z" fill="#a8b4f0" stroke="#7080c8"/><path d="M2 6Q0 16 7 17 12 15 10 7M7 17Q8 23 13 22 19 20 18 13" fill="none" stroke="#587888" stroke-width="2"/><circle cx="18" cy="12" r="2" fill="#ccd" stroke="#456"/></svg>MdChk</button>
                <button class="tool"><svg viewBox="0 0 24 24"><path d="M1 1H17V13H1z" fill="#2868c0" stroke="#889"/><path d="M3 3H15V11H3z" fill="#78b0f0"/><path d="M5 9 7 4 9 9 12 4" fill="none" stroke="#f8e080" stroke-width="2"/><path d="M8 24Q9 16 16 16T24 24z" fill="#f4f6ff" stroke="#88a"/><circle cx="17" cy="11" r="5" fill="#f4c890"/><path d="M11 10Q13 4 18 5T23 11L18 8z" fill="#c86820"/><path d="M16 17V23" stroke="#2848b8" stroke-width="2"/></svg>Favor1</button>
            </div>
        </aside>
    </div>

    <footer class="status"><span>Reject last generated element</span><span class="renderer">Fast Renderer</span></footer>
    <div class="taskbar"><i class="task"></i><span class="ime">2017</span><span class="clock">18:43</span></div>

    <div class="activate"><p>激活 Windows</p><p class="small">转到“设置”以激活 Windows。</p></div>
    <div class="mark"><span>知乎</span> @Warmlovers</div>

    <script src="mesh.js"></script>
</body>
</html>
```
FILE: mesh.js
```js
// 20 x 50 elements between the four corners of the strip
let a = [964, 198], b = [1022, 260], c = [908, 802], d = [850, 740];

function entre(p, q, t){
    return (p[0] + (q[0] - p[0]) * t).toFixed(1) + " " + (p[1] + (q[1] - p[1]) * t).toFixed(1);
}

let path = "";
for(let i = 0; i <= 20; i++){
    path += "M" + entre(a, b, i / 20) + "L" + entre(d, c, i / 20);
}
for(let i = 0; i <= 50; i++){
    path += "M" + entre(a, d, i / 50) + "L" + entre(b, c, i / 50);
}
document.getElementById("mesh").setAttribute("d", path);
```
FILE: styles.css
```css
*{
    margin: 0px;
    padding: 0px;
    box-sizing: border-box;
}
body{
    font-family: "DejaVu Sans Condensed", "DejaVu Sans", sans-serif;
    font-size: 12px;
    line-height: 16px;
    color: #111;
    background: #efefef;
    height: 100vh;
    display: flex;
    flex-direction: column;
    overflow: hidden;
    position: relative;
}
button, input, select{
    font: inherit;
    color: inherit;
}
button{
    border: 0px;
    background: none;
}
.sprite{
    position: absolute;
    width: 0px;
    height: 0px;
}

/* title + menu */
.titlebar{
    display: flex;
    align-items: center;
    height: 22px;
    background: #fff;
    padding: 1px 2px 0px 4px;
}
.appicon{
    width: 12px;
    height: 14px;
    margin-right: 7px;
}
.titlebar h1{
    font: 12px/16px "Noto Sans", sans-serif;
    color: #333;
    flex: 1;
}
.winbtns{
    display: flex;
}
.winbtns button{
    width: 46px;
    height: 20px;
}
.winbtns svg{
    width: 12px;
    height: 12px;
    fill: none;
    stroke: #111;
}
.menu{
    display: flex;
    gap: 1px;
    height: 22px;
    background: #fff;
    font: 12px/20px "Noto Sans", sans-serif;
}
.menu button{
    padding: 0px 7px;
}

/* main area */
.work{
    flex: 1;
    display: flex;
    min-height: 0px;
}
.left-side{
    flex: 1;
    min-width: 0px;
    display: flex;
    flex-direction: column;
}
.canvas{
    flex: 1;
    position: relative;
    margin: 1px 0px 0px 1px;
    border: 1px solid #000;
    background: #fff;
    overflow: hidden;
}
.scene{
    position: absolute;
    top: 0px;
    left: 0px;
    width: 100%;
    height: 100%;
}
.seglabel{
    font: bold 15px "Liberation Sans", sans-serif;
    fill: #f4f41c;
}
.axis{
    font: bold 16px "Liberation Sans", sans-serif;
}

/* tree */
.tree{
    position: relative;
    width: 200px;
    font: 14px/17px "Liberation Sans", sans-serif;
    color: #000;
}
.treebar{
    height: 16px;
}
.treebar svg{
    width: 28px;
    height: 14px;
    display: block;
}
.node{
    display: flex;
    height: 17px;
}
.node i{
    width: 12px;
    height: 17px;
    flex: none;
}
.bar{
    background: linear-gradient(#808080, #808080) 5px 0px / 2px 17px no-repeat;
}
.tee{
    background: linear-gradient(#808080, #808080) 5px 0px / 2px 17px no-repeat,
        linear-gradient(#808080, #808080) 5px 7px / 7px 2px no-repeat;
}
.ell{
    background: linear-gradient(#808080, #808080) 5px 0px / 2px 9px no-repeat,
        linear-gradient(#808080, #808080) 5px 7px / 7px 2px no-repeat;
}
.exp{
    background: linear-gradient(#808080, #808080) 5px 13px / 2px 4px no-repeat,
        linear-gradient(#808080, #808080) 2px 8px / 8px 1px no-repeat,
        linear-gradient(#fff, #fff) 3px 5px / 6px 7px no-repeat,
        linear-gradient(#808080, #808080) 2px 4px / 8px 9px no-repeat;
}
.exp.plus{
    background: linear-gradient(#808080, #808080) 6px 4px / 1px 9px no-repeat,
        linear-gradient(#808080, #808080) 2px 8px / 8px 1px no-repeat,
        linear-gradient(#fff, #fff) 3px 5px / 6px 7px no-repeat,
        linear-gradient(#808080, #808080) 2px 4px / 8px 9px no-repeat;
}
.node label{
    display: flex;
    white-space: nowrap;
    gap: 3px;
    padding-left: 2px;
}
.node.leaf label{
    gap: 11px;
}
.off{
    color: #808080;
}
.node input{
    width: 11px;
    height: 11px;
    margin-top: 4px;
    border-color: #777;
}
.node b{
    line-height: 14px;
}

/* check boxes, radios */
input[type="checkbox"], input[type="radio"]{
    appearance: none;
    flex: none;
    width: 13px;
    height: 13px;
    border: 1px solid #333;
    background: #fff;
    display: inline-grid;
    place-content: center;
}
input[type="checkbox"]:checked::before{
    content: "";
    width: 3px;
    height: 7px;
    margin-bottom: 2px;
    border: solid #444;
    border-width: 0px 1px 1px 0px;
    transform: rotate(40deg);
}
input[type="radio"]{
    border-radius: 50%;
}
input[type="radio"]:checked::before{
    content: "";
    width: 7px;
    height: 7px;
    border-radius: 50%;
    background: #333;
}
input[type="radio"]:disabled{
    border-color: #bbb;
}
input[type="radio"]:disabled::before{
    background: #c4c4c4;
}
input[type="text"]{
    min-width: 0px;
    border: 1px solid #7a7a7a;
    background: #fff;
}

/* windows on the canvas */
.window{
    position: absolute;
    background: #f0f0f0;
    border: 1px solid #b4b4b4;
    border-top-color: #f4f4f4;
    border-bottom-color: #e4e4e4;
}
.window header{
    display: flex;
    align-items: center;
    justify-content: space-between;
    height: 30px;
    background: #fff;
    padding: 0px 9px 1px 8px;
    margin: 0px -1px;
}
.window header h2{
    font: 12px/18px "Noto Sans", sans-serif;
    color: #999;
}
.window header svg{
    width: 12px;
    height: 12px;
    display: block;
    stroke: #777;
}
.window label{
    display: flex;
    align-items: center;
    gap: 3px;
    white-space: nowrap;
}
.window button:not(header button){
    background: #e1e1e1;
    border: 1px solid #adadad;
}
.window button:disabled:not(header button){
    background: #cccccc;
    border-color: #c0c0c0;
    color: #888;
}

.selgeom{
    left: 56px;
    top: 160px;
    width: 239px;
    font-size: 11px;
}
.selgeom header svg{
    stroke: #ddd;
}
.selgeom h2{
    color: #aaa;
}
.selbody{
    display: flex;
    padding: 2px 2px 2px 1px;
    justify-content: space-between;
}
.radios{
    display: flex;
    gap: 11px;
    height: 79px;
    padding: 1px 0px 0px 8px;
    color: #777;
}
.radios div{
    width: 46px;
}
.radios label{
    height: 17px;
}
.radios .apart{
    margin-top: 7px;
}
.indsel{
    display: flex;
    align-items: center;
    font-size: 10px;
    padding-top: 1px;
}
.indsel label:first-child{
    flex: 1;
}
.indsel #selid{
    width: 45px;
    height: 22px;
    margin-left: 2px;
}
.selbtns{
    display: flex;
    flex-direction: column;
    gap: 2px;
    width: 63px;
}
.selbtns button{
    height: 18px;
    font-size: 10px;
    line-height: 14px;
}
.filters{
    display: grid;
    grid-template-columns: 23px 23px;
    grid-template-rows: 30px;
    grid-auto-rows: 22px;
}
.window .filters button:not(header button){
    background: #bbdcf5;
    border-color: #98c8ec;
}
.window .filters .plain:not(header button){
    background: none;
    border: 0px;
    align-self: start;
}
.filters svg{
    width: 20px;
    height: 20px;
    display: block;
}
.none{
    color: #fff;
}
.all{
    color: #30c0c8;
}

.elegen{
    left: 468px;
    top: 50px;
    width: 206px;
}
.genbody{
    height: 645px;
    display: flex;
    flex-direction: column;
    padding: 0px 3px;
}
.genbody hr, .side hr{
    border: 0px;
    border-top: 1px solid #999;
}
.kind{
    display: flex;
    justify-content: space-between;
    height: 38px;
    padding: 0px 24px 0px 4px;
}
.line{
    display: flex;
    height: 23px;
    justify-content: space-between;
}
.line.wide{
    height: 26px;
}
.pick{
    padding-right: 38px;
}
.field{
    display: flex;
    gap: 3px;
    height: 23px;
    flex: none;
}
.field input{
    flex: 1;
    height: 22px;
    text-align: right;
    padding-right: 6px;
}
.field button{
    width: 64px;
}
.nid{
    margin-bottom: 5px;
}
.field input:disabled{
    text-align: left;
    padding-left: 5px;
    background: #f0f0f0;
    border-color: #ccc;
    color: #777;
}
.by{
    display: flex;
    gap: 3px;
    margin: 5px 0px 3px 0px;
}
.by select{
    flex: 1;
    height: 22px;
    appearance: none;
    border: 1px solid #adadad;
    padding-left: 3px;
    background: #e1e1e1 url("data:image/svg+xml,%3Csvg xmlns='http://www.w3.org/2000/svg' width='10' height='6'%3E%3Cpath d='M1 1 5 5 9 1' fill='none' stroke='%23444'/%3E%3C/svg%3E") right 4px center no-repeat;
}
fieldset{
    border: 1px solid #dcdcdc;
    padding: 0px 6px 0px 5px;
    margin-bottom: 2px;
    min-width: 0px;
}
legend{
    margin-left: 2px;
    padding: 0px 1px;
}
fieldset > label{
    height: 25px;
}
.seg{
    display: flex;
    align-items: center;
    gap: 4px;
    height: 22px;
}
.seg label{
    width: 24px;
}
.seg input{
    flex: 1;
    height: 22px;
    text-align: right;
    padding-right: 5px;
}
.seg .ratio{
    flex: none;
    width: 40px;
}
.spin{
    width: 15px;
    display: flex;
    flex-direction: column;
}
.spin button{
    height: 9px;
    display: grid;
    place-content: center;
}
.spin button::before{
    content: "";
    border: 3px solid transparent;
    border-top: 0px;
    border-bottom: 3px solid #000;
}
.spin .down::before{
    border-bottom: 0px;
    border-top: 3px solid #000;
}
.newel{
    height: 30px;
    padding-left: 4px;
}
.push{
    margin-top: auto;
}
.actions{
    display: flex;
    justify-content: center;
    gap: 4px;
    padding: 5px 0px 3px 0px;
}
.actions button{
    width: 58px;
    height: 23px;
}
.grip{
    position: absolute;
    right: 2px;
    bottom: 1px;
    width: 10px;
    height: 10px;
}

/* toolbars */
.tool{
    display: flex;
    flex-direction: column;
    align-items: center;
    padding-top: 3px;
    white-space: nowrap;
    border: 1px solid transparent;
    flex: none;
}
.tool svg{
    width: 24px;
    height: 24px;
    flex: none;
}
.on{
    background: #bfdcf3;
    border-color: #a4cdec;
}
.toolbar{
    display: flex;
    height: 45px;
}
.sep{
    width: 1px;
    height: 40px;
    margin: 2px 4px 0px 5px;
    background: #888;
}
.drop{
    width: 26px;
}
.drop::before{
    content: "";
    display: inline-block;
    border: 5px solid transparent;
    border-top: 6px solid #000;
    border-bottom: 0px;
}
.s32{ width: 32px; }
.s34{ width: 34px; }
.s36{ width: 36px; }
.s38{ width: 38px; }
.s40{ width: 40px; }
.s42{ width: 42px; }
.s46{ width: 46px; }
.s48{ width: 48px; }
.keys{
    color: #999;
    height: 24px;
    line-height: 12px;
}
.angle{
    height: 24px;
    font-size: 11px;
    line-height: 18px;
}
.tiny{
    font: 8px "Liberation Serif", serif;
}

/* cube colours */
.top, .left, .right{
    stroke: var(--line, #111);
    stroke-linejoin: round;
}
.top{ fill: var(--top, none); }
.left{ fill: var(--left, none); }
.right{ fill: var(--right, none); }
.ln{
    fill: none;
    stroke: var(--line, #111);
    stroke-width: var(--thin, 1);
}
.white{ --top: #fff; --left: #fff; --right: #fff; --thin: .7; }
.shade{ --top: #f4f8ff; --left: #c4d2ea; --right: #5c6e90; }
.flat{ --top: #ccd4e6; --left: #bcc4d8; --right: #b0b8cc; }
.dark{ --top: #b4bed4; --left: #8c98b4; --right: #5c6a8c; --thin: .6; }
.blue{ --top: #e0ecff; --left: #6c9cf0; --right: #2c58d0; --line: #102060; }
.wired{ --line: #2828a0; }
.navy{ --top: #8c98e8; --left: #3444c0; --right: #141478; }
.noline{ --line: none; }
.pale{ --top: #eef2ff; --left: #d0daf8; --right: #b8c6f4; --line: #5c6cb8; }
.teal{ --top: #28b0bc; --left: #149ca8; --right: #0c8894; --line: #0c7884; --thin: .6; }
.violet{ color: #4848a8; }
.ink{ color: #222238; }

/* command line and log */
.cmdrow{
    display: flex;
    height: 26px;
}
.cmdrow .cmd{
    flex: 903;
    height: 25px;
    padding: 0px 3px 4px 3px;
    font-weight: bold;
}
.log{
    flex: 907;
    height: 25px;
    display: flex;
    border: 1px solid #aaa;
    background: #cbe8cf;
}
.log p{
    flex: 1;
    padding: 5px 2px 0px 2px;
    font-size: 13px;
    font-weight: bold;
}
.scroll{
    width: 18px;
    background: #f4f4f4;
    display: flex;
    flex-direction: column;
    justify-content: space-around;
    align-items: center;
}
.scroll button, .scroll svg{
    width: 10px;
    height: 6px;
    display: block;
}
.scroll svg{
    fill: none;
    stroke: #444;
    stroke-width: 2;
}

/* right side */
.side{
    width: 110px;
    display: flex;
    gap: 7px;
}
.col{
    width: 47px;
    display: flex;
    flex-direction: column;
}
.col.wide{
    width: 49px;
}
.col .tool{
    height: 44px;
    padding-top: 1px;
}
.side hr{
    margin: 2px 2px 5px 2px;
}
.more{
    margin: 14px 0px 0px 11px;
    width: 8px;
}
.more svg{
    width: 8px;
    height: 10px;
}

/* bottom */
.status{
    display: flex;
    justify-content: space-between;
    height: 24px;
    border-top: 1px solid #ddd;
    padding-left: 2px;
    font: bold 12px/24px "Noto Sans", sans-serif;
    color: #000;
}
.renderer{
    width: 149px;
    padding-left: 5px;
    border-left: 1px solid #ccc;
}
.taskbar{
    display: flex;
    align-items: flex-start;
    height: 8px;
    overflow: hidden;
    background: #24484f;
    color: #fff;
    font: 12px/20px "Noto Sans", sans-serif;
}
.task{
    width: 48px;
    height: 8px;
    margin-left: 342px;
    background: #25808a;
}
.ime{
    margin: 2px 0px 0px auto;
}
.clock{
    margin: 2px 28px 0px 246px;
}

/* overlays */
.activate{
    position: absolute;
    right: 88px;
    bottom: 57px;
    width: 200px;
    color: #b4b4b4;
    font: 20px/26px "Noto Sans", "Noto Sans CJK SC", sans-serif;
    white-space: nowrap;
}
.activate .small{
    font-size: 15px;
    line-height: 20px;
}
.mark{
    position: absolute;
    right: 50px;
    bottom: 38px;
    color: #fff;
    font: 500 54px/76px "Noto Sans", "Noto Sans CJK SC", sans-serif;
    text-shadow: 3px 3px 1px rgba(110, 110, 110, .6);
    white-space: nowrap;
}
.mark span{
    font-size: 60px;
}
```
